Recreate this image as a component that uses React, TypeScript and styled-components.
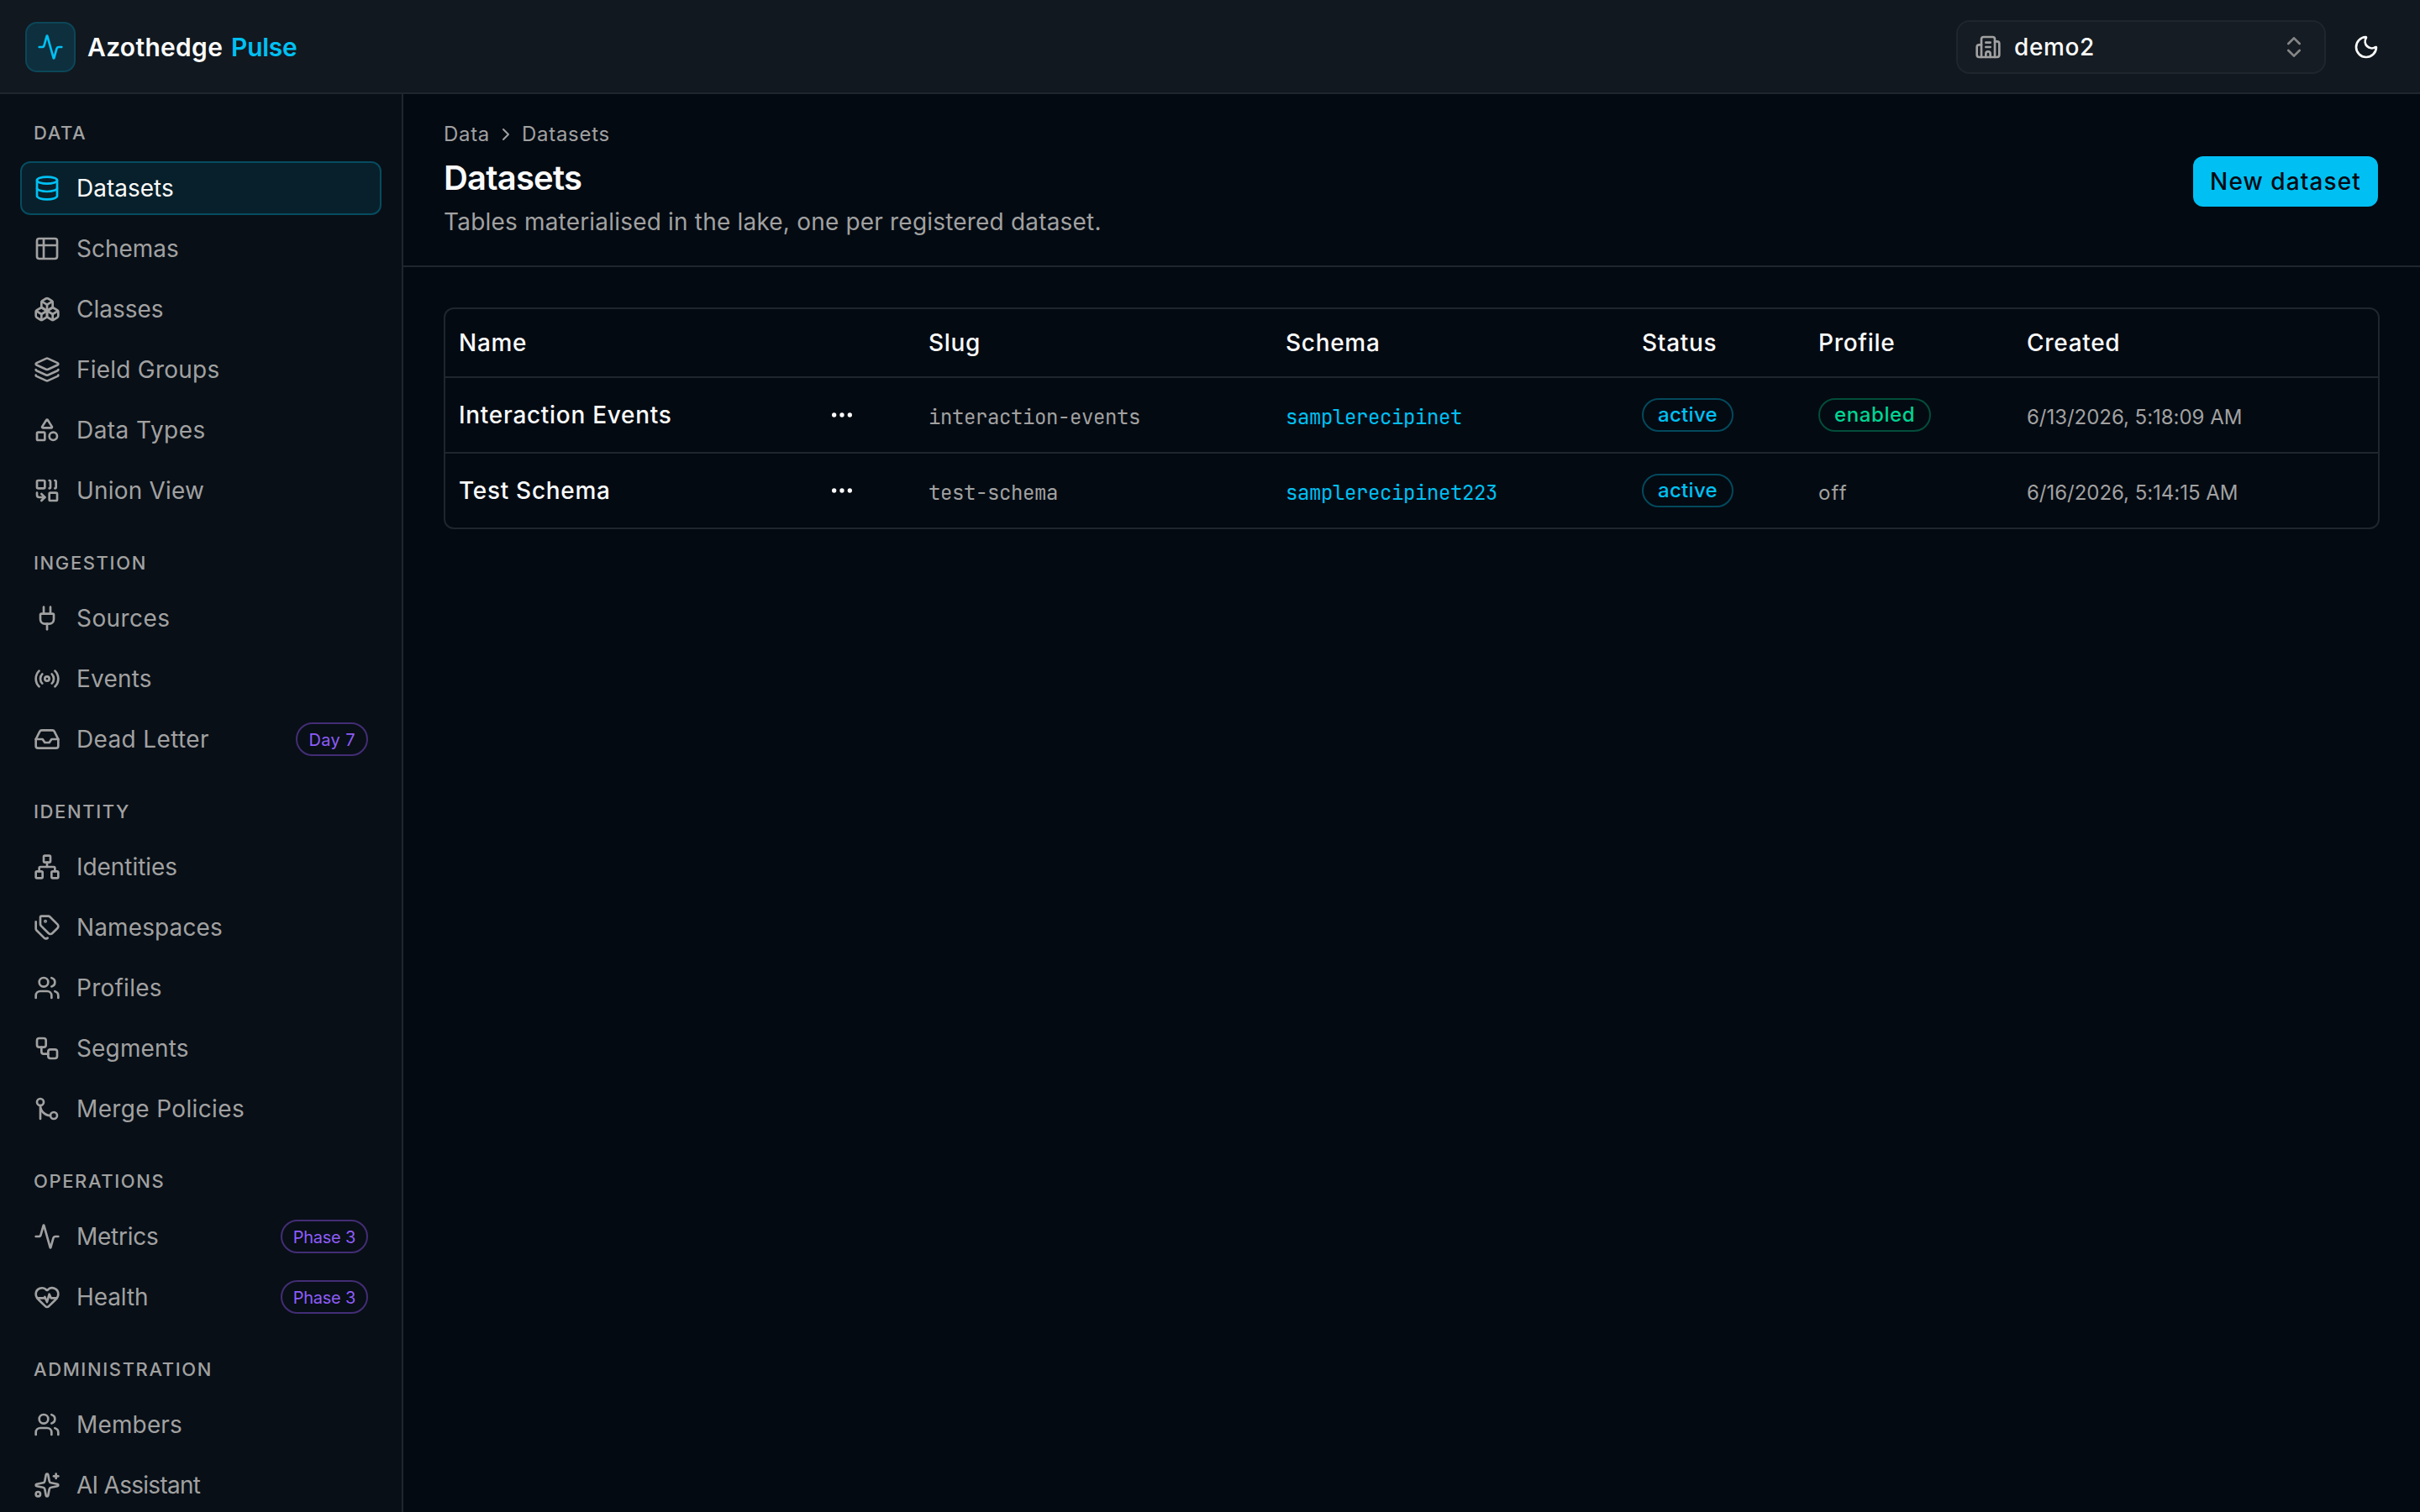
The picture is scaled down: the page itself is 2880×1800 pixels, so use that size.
import styled, { createGlobalStyle, css } from 'styled-components';
import {
  Activity,
  Boxes,
  Building2,
  ChevronRight,
  ChevronsUpDown,
  Database,
  Ellipsis,
  GitMerge,
  HeartPulse,
  Inbox,
  Layers,
  Moon,
  Network,
  Plug,
  Radio,
  Shapes,
  Sparkles,
  Table2,
  Tags,
  Users,
  Workflow,
} from 'lucide-react';
import type { ComponentType } from 'react';

const GlobalStyle = createGlobalStyle`
  *, *::before, *::after {
    box-sizing: border-box;
  }

  body {
    margin: 0;
    overflow: hidden;
    background: #030a12;
  }

  button {
    font: inherit;
    color: inherit;
    letter-spacing: inherit;
    background: none;
    border: 0;
    padding: 0;
  }
`;

const Shell = styled.div`
  display: flex;
  flex-direction: column;
  height: 100vh;
  overflow: hidden;
  background: #030a12;
  color: #fafafa;
  font-family: Inter, sans-serif;
  font-size: 28px;
  line-height: 40px;
`;

const TopBar = styled.header`
  display: flex;
  align-items: center;
  justify-content: space-between;
  flex: none;
  height: 112px;
  padding: 2px 30px 0;
  background: #11181f;
  border-bottom: 2px solid #1f262e;
`;

const Brand = styled.div`
  display: flex;
  align-items: center;
  gap: 14px;
  font-size: 30px;
  font-weight: 600;
  letter-spacing: 0.3px;
`;

const BrandMark = styled.span`
  display: grid;
  place-items: center;
  width: 60px;
  height: 60px;
  border: 2px solid #0c4659;
  border-radius: 14px;
  background: #0e2f3d;
  color: #00c0f3;
`;

const BrandAccent = styled.span`
  margin-left: 2px;
  color: #00c0f3;
  letter-spacing: -0.3px;
`;

const TopActions = styled.div`
  display: flex;
  align-items: center;
  gap: 14px;
`;

const TenantSelect = styled.button`
  display: flex;
  align-items: center;
  gap: 15px;
  width: 440px;
  height: 64px;
  padding: 0 20px;
  border: 2px solid #1f262e;
  border-radius: 16px;
  background: #151c23;
  font-weight: 500;
  letter-spacing: 0.6px;
`;

const TenantName = styled.span`
  flex: 1;
  text-align: left;
`;

const Muted = styled.span`
  display: flex;
  color: #a1a1a1;
`;

const Faded = styled(Muted)`
  opacity: 0.8;
`;

const IconButton = styled.button`
  display: grid;
  place-items: center;
  width: 68px;
  height: 68px;
`;

const Body = styled.div`
  display: flex;
  flex: 1;
  min-height: 0;
`;

const Sidebar = styled.nav`
  display: flex;
  flex-direction: column;
  flex: none;
  gap: 38px;
  width: 480px;
  padding: 30px 24px 0;
  background: #080f17;
  border-right: 2px solid #1f262e;
  overflow: hidden;
`;

const NavSection = styled.section`
  display: flex;
  flex-direction: column;
  flex: none;
  gap: 8px;
`;

const NavHeading = styled.h2`
  margin: 0 0 10px;
  padding: 0 16px;
  font-size: 22px;
  font-weight: 500;
  line-height: 32px;
  letter-spacing: 0.073em;
  text-transform: uppercase;
  color: #a1a1a1;
`;

const NavItem = styled.a<{ $active?: boolean }>`
  display: flex;
  align-items: center;
  gap: 19px;
  height: 64px;
  padding: 0 14px;
  border: 2px solid transparent;
  border-radius: 12px;
  color: #a1a1a1;

  ${({ $active }) =>
    $active &&
    css`
      border-color: #064c60;
      background: #08202b;
      color: #fafafa;

      svg {
        color: #00c0f3;
      }
    `}
`;

const NavLabel = styled.span<{ $tracking?: number }>`
  flex: 1;
  letter-spacing: ${({ $tracking = 0 }) => $tracking}px;
`;

const tones = {
  violet: { text: '#8e5cf7', border: '#432d75' },
  cyan: { text: '#00c0f3', border: '#03495c' },
  green: { text: '#00d492', border: '#034d3a' },
};

const Pill = styled.span<{ $tone: keyof typeof tones }>`
  display: inline-flex;
  align-items: center;
  height: 40px;
  padding: 0 17px;
  border: 2px solid ${({ $tone }) => tones[$tone].border};
  border-radius: 20px;
  color: ${({ $tone }) => tones[$tone].text};
  font-size: 24px;
  font-weight: 500;
  line-height: 32px;
  letter-spacing: ${({ $tone }) => ($tone === 'green' ? '0.6px' : '0.3px')};
  vertical-align: middle;
`;

const PhasePill = styled(Pill)<{ $tight?: boolean }>`
  padding: 2px 13px 0;
  font-size: 20px;
  font-weight: 400;
  letter-spacing: ${({ $tight }) => ($tight ? '-0.25px' : '0.4px')};
`;

const Main = styled.main`
  flex: 1;
  min-width: 0;
`;

const PageHeader = styled.div`
  display: flex;
  align-items: center;
  justify-content: space-between;
  height: 206px;
  padding: 0 48px;
  border-bottom: 2px solid #1f262e;
`;

const Breadcrumbs = styled.div`
  display: flex;
  align-items: center;
  gap: 7px;
  font-size: 24px;
  line-height: 32px;
  letter-spacing: 0.7px;
  color: #a1a1a1;
`;

const PageTitle = styled.h1`
  margin: 8px 0 4px;
  font-size: 40px;
  font-weight: 600;
  line-height: 56px;
  letter-spacing: -0.8px;
`;

const PageLead = styled.p`
  margin: 0;
  letter-spacing: 0.19px;
  color: #a1a1a1;
`;

const PrimaryButton = styled.button`
  width: 220px;
  height: 60px;
  margin: 4px 2px 0 0;
  border-radius: 12px;
  background: #00c0f3;
  color: #030a12;
  font-weight: 500;
  letter-spacing: 1.1px;
`;

const TableFrame = styled.div`
  margin: 48px;
  border: 2px solid #1f262e;
  border-radius: 12px;
  overflow: hidden;
`;

const Table = styled.table`
  width: 100%;
  table-layout: fixed;
  border-collapse: separate;
  border-spacing: 0;
`;

const HeadCell = styled.th<{ $width?: number }>`
  width: ${({ $width }) => ($width ? `${$width}px` : 'auto')};
  height: 82px;
  padding: 0 16px;
  border-bottom: 2px solid #1f262e;
  font-weight: 500;
  letter-spacing: 0.7px;
  text-align: left;
`;

const Cell = styled.td`
  height: 88px;
  padding: 0 16px;

  tr:not(:last-child) > & {
    height: 90px;
    border-bottom: 2px solid #1f262e;
  }
`;

const TextCell = styled(Cell)`
  padding-top: 3px;
`;

const PillCell = styled(Cell)`
  line-height: 0;
`;

const NameCell = styled.div`
  display: flex;
  align-items: center;
  justify-content: space-between;
  padding-right: 41px;
  font-weight: 500;
  letter-spacing: 0.7px;
`;

const RowMenu = styled.button`
  display: grid;
  place-items: center;
  width: 60px;
  height: 60px;
`;

const Mono = styled.span<{ $link?: boolean }>`
  font-family: 'JetBrains Mono', monospace;
  font-size: 24px;
  letter-spacing: -0.4px;
  color: ${({ $link }) => ($link ? '#00c0f3' : '#a1a1a1')};
`;

const Small = styled.span<{ $tracking?: number }>`
  font-size: 24px;
  letter-spacing: ${({ $tracking = 0 }) => $tracking}px;
  color: #a1a1a1;
`;

// Two outlined squares joined by an arrow, with the merged edges behind.
const CombineIcon = ({ size = 24 }: { size?: number | string }) => (
  <svg
    width={size}
    height={size}
    viewBox="0 0 24 24"
    fill="none"
    stroke="currentColor"
    strokeWidth="2"
    strokeLinecap="round"
    strokeLinejoin="round"
  >
    <path d="M14 3a1 1 0 0 1 1 1v5a1 1 0 0 1-1 1" />
    <path d="M19 3a1 1 0 0 1 1 1v5a1 1 0 0 1-1 1" />
    <path d="m7 15 3 3" />
    <path d="m7 21 3-3H5a2 2 0 0 1-2-2v-2" />
    <rect x="14" y="14" width="7" height="7" rx="1" />
    <rect x="3" y="3" width="7" height="7" rx="1" />
  </svg>
);

interface NavEntry {
  label: string;
  icon: ComponentType<{ size?: number | string }>;
  active?: boolean;
  badge?: string;
  tracking?: number;
}

const sections: { title: string; items: NavEntry[] }[] = [
  {
    title: 'Data',
    items: [
      { label: 'Datasets', icon: Database, active: true },
      { label: 'Schemas', icon: Table2 },
      { label: 'Classes', icon: Boxes },
      { label: 'Field Groups', icon: Layers, tracking: 0.23 },
      { label: 'Data Types', icon: Shapes, tracking: 0.46 },
      { label: 'Union View', icon: CombineIcon, tracking: 0.18 },
    ],
  },
  {
    title: 'Ingestion',
    items: [
      { label: 'Sources', icon: Plug, tracking: 0.42 },
      { label: 'Events', icon: Radio, tracking: 0.2 },
      { label: 'Dead Letter', icon: Inbox, badge: 'Day 7', tracking: 0.36 },
    ],
  },
  {
    title: 'Identity',
    items: [
      { label: 'Identities', icon: Network, tracking: -0.05 },
      { label: 'Namespaces', icon: Tags, tracking: 0.12 },
      { label: 'Profiles', icon: Users, tracking: 0.25 },
      { label: 'Segments', icon: Workflow, tracking: 0.14 },
      { label: 'Merge Policies', icon: GitMerge, tracking: 0.36 },
    ],
  },
  {
    title: 'Operations',
    items: [
      { label: 'Metrics', icon: Activity, badge: 'Phase 3', tracking: -0.26 },
      { label: 'Health', icon: HeartPulse, badge: 'Phase 3', tracking: -0.1 },
    ],
  },
  {
    title: 'Administration',
    items: [
      { label: 'Members', icon: Users, tracking: 0.15 },
      { label: 'AI Assistant', icon: Sparkles, tracking: -0.72 },
    ],
  },
];

const datasets = [
  {
    name: 'Interaction Events',
    slug: 'interaction-events',
    schema: 'samplerecipinet',
    status: 'active',
    profile: true,
    created: '6/13/2026, 5:18:09 AM',
  },
  {
    name: 'Test Schema',
    slug: 'test-schema',
    schema: 'samplerecipinet223',
    status: 'active',
    profile: false,
    created: '6/16/2026, 5:14:15 AM',
  },
];

const App = () => {
  return (
    <>
      <GlobalStyle />
      <Shell>
        <TopBar>
          <Brand>
            <BrandMark><Activity size={32} /></BrandMark>
            <span>Azothedge <BrandAccent>Pulse</BrandAccent></span>
          </Brand>
          <TopActions>
            <TenantSelect>
              <Muted><Building2 size={32} /></Muted>
              <TenantName>demo2</TenantName>
              <Faded><ChevronsUpDown size={32} /></Faded>
            </TenantSelect>
            <IconButton><Moon size={32} /></IconButton>
          </TopActions>
        </TopBar>

        <Body>
          <Sidebar>
            {sections.map((section) => (
              <NavSection key={section.title}>
                <NavHeading>{section.title}</NavHeading>
                {section.items.map(({ label, icon: Icon, active, badge, tracking }) => (
                  <NavItem key={label} $active={active}>
                    <Icon size={32} />
                    <NavLabel $tracking={tracking}>{label}</NavLabel>
                    {badge && (
                      <PhasePill $tone="violet" $tight={badge.startsWith('Phase')}>{badge}</PhasePill>
                    )}
                  </NavItem>
                ))}
              </NavSection>
            ))}
          </Sidebar>

          <Main>
            <PageHeader>
              <div>
                <Breadcrumbs>
                  <span>Data</span>
                  <ChevronRight size={24} />
                  <span>Datasets</span>
                </Breadcrumbs>
                <PageTitle>Datasets</PageTitle>
                <PageLead>Tables materialised in the lake, one per registered dataset.</PageLead>
              </div>
              <PrimaryButton>New dataset</PrimaryButton>
            </PageHeader>

            <TableFrame>
              <Table>
                <thead>
                  <tr>
                    <HeadCell $width={559}>Name</HeadCell>
                    <HeadCell $width={425}>Slug</HeadCell>
                    <HeadCell $width={424}>Schema</HeadCell>
                    <HeadCell $width={210}>Status</HeadCell>
                    <HeadCell $width={248}>Profile</HeadCell>
                    <HeadCell>Created</HeadCell>
                  </tr>
                </thead>
                <tbody>
                  {datasets.map((d) => (
                    <tr key={d.slug}>
                      <Cell>
                        <NameCell>
                          {d.name}
                          <RowMenu><Ellipsis size={32} /></RowMenu>
                        </NameCell>
                      </Cell>
                      <TextCell><Mono>{d.slug}</Mono></TextCell>
                      <TextCell><Mono $link>{d.schema}</Mono></TextCell>
                      <PillCell><Pill $tone="cyan">{d.status}</Pill></PillCell>
                      {d.profile ? (
                        <PillCell><Pill $tone="green">enabled</Pill></PillCell>
                      ) : (
                        <TextCell><Small $tracking={1.2}>off</Small></TextCell>
                      )}
                      <TextCell><Small $tracking={-0.03}>{d.created}</Small></TextCell>
                    </tr>
                  ))}
                </tbody>
              </Table>
            </TableFrame>
          </Main>
        </Body>
      </Shell>
    </>
  )
}

export default App
